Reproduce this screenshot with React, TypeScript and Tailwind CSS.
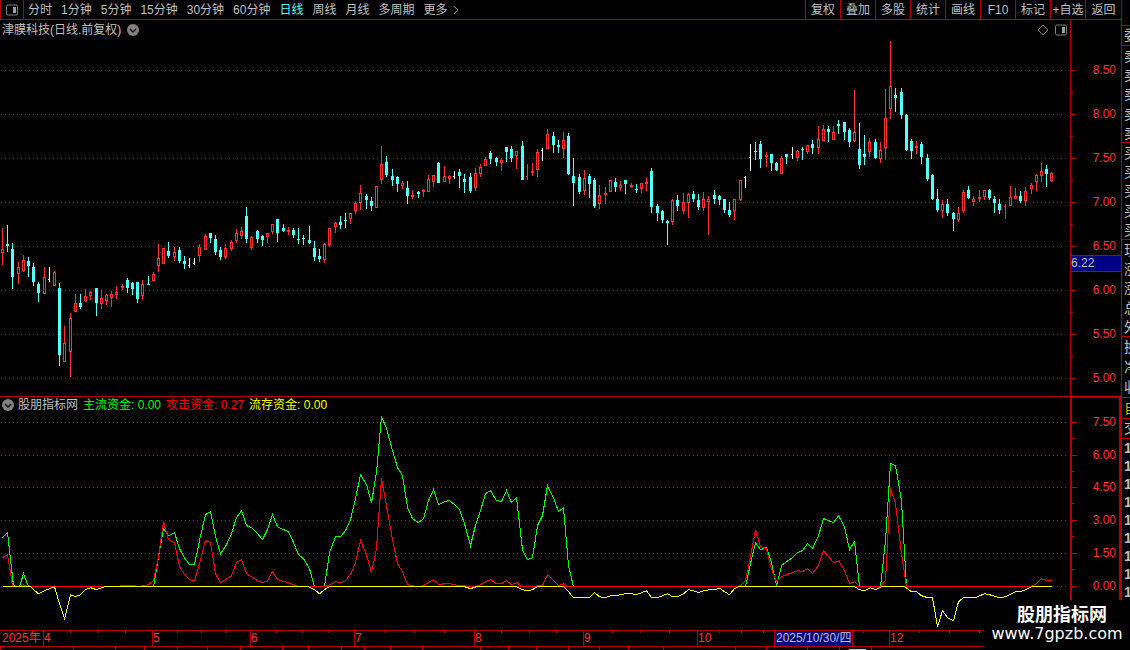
import { ChevronRight } from 'lucide-react';

// One candle per entry: kind (r = rise, c = fall, w = flat), high, body top, body bottom, low
const CANDLES = `
r228,249,253,265 c225,244,246,252 c243,249,277,289 r262,267,274,284 r255,260,271,272 c257,261,266,277
c263,267,282,286 c282,284,293,302 r267,277,294,294 w267,279,280,282 r271,272,286,286 c283,288,355,366
r326,343,362,362 r313,318,352,377 r294,303,312,312 c294,303,307,309 r289,296,301,302 r291,292,296,300
c288,288,303,316 r290,298,304,309 r294,295,301,305 r291,294,298,307 r286,292,295,299 r284,286,288,290
c278,280,288,293 c282,283,289,295 c282,282,299,303 r280,284,296,300 c276,284,285,285 r272,274,281,281
r244,258,266,272 r248,248,264,264 c242,251,256,258 r247,252,257,261 c247,250,261,263 c256,261,264,269
w258,265,266,268 w258,263,264,265 r244,247,256,262 r234,236,250,250 c233,233,238,243 c235,239,252,255
c247,250,257,260 r244,248,257,259 r240,242,249,251 r229,233,241,243 r227,231,236,239 c207,216,239,243
r236,237,248,250 c230,231,239,243 c235,236,240,246 r233,233,237,243 r224,224,232,234 c219,219,233,242
c224,228,231,232 r227,230,232,235 c228,230,235,238 c228,239,240,244 c235,238,239,245 c226,240,243,244
c241,248,257,261 c249,256,259,262 r243,244,260,263 r228,228,245,247 r222,223,227,233 c216,222,225,229
c213,220,221,228 r213,213,219,224 r201,203,211,214 r185,193,203,210 c194,196,200,209 c197,201,206,211
r186,186,208,208 r146,164,180,184 c156,162,175,177 c169,176,180,186 c176,177,184,192 r181,183,186,189
c181,188,196,204 r190,195,197,199 c191,192,194,198 r189,190,192,197 r175,179,192,192 r175,175,182,187
c162,163,183,183 r166,176,182,182 r175,176,179,184 w171,176,177,179 c169,172,176,188 c174,179,182,193
c173,177,191,193 r168,173,188,191 r164,167,174,177 r157,159,166,166 c151,153,159,164 c157,158,162,166
r158,160,163,171 c147,147,152,162 c146,149,158,162 r151,151,156,169 c141,146,180,180 r164,176,177,180
r163,171,173,176 r149,152,170,177 w148,150,151,161 r129,134,149,149 c132,136,145,153 c140,145,147,153
r132,140,149,158 c133,136,174,175 c158,176,183,206 c174,177,192,194 r170,178,191,195 c174,176,184,198
c178,180,206,208 r185,195,204,209 r187,193,195,204 r180,180,192,192 c178,182,187,192 r181,185,188,191
c180,180,184,194 r183,185,187,188 c184,189,190,193 r183,183,189,193 r178,182,184,191 c168,171,207,213
c204,206,213,221 c210,211,220,223 c220,221,223,245 r199,200,222,225 c195,200,206,211 r193,202,211,214
r193,194,203,218 c191,194,199,202 c194,200,207,210 r192,199,208,211 r196,199,202,235 c190,195,199,204
c195,196,200,205 c199,199,210,213 c202,210,215,217 r199,199,211,220 r180,180,200,201 w176,177,178,188
w144,157,158,171 c142,151,152,160 c141,144,159,168 r152,155,157,167 c154,154,163,171 c162,163,170,171
r156,158,174,174 c154,154,157,164 w147,154,155,159 r150,151,158,161 c147,149,150,160 r145,145,152,154
c140,144,148,154 r126,139,148,154 r125,129,141,141 c126,129,132,142 r126,132,140,140 c120,124,126,134
c122,122,132,140 c128,130,142,147 r90,132,141,142 c123,149,165,169 c135,154,157,165 r138,142,152,157
c139,142,158,159 r142,150,159,163 r89,118,148,160 r41,86,109,119 c88,95,98,112 c88,92,115,119
c114,115,150,151 c139,141,151,159 r141,146,148,154 c142,144,157,164 c154,158,179,181 c174,175,199,200
c189,199,210,212 r200,204,211,218 c199,204,213,216 c212,213,219,231 r207,213,220,222 r190,192,211,213
c186,190,198,199 r196,199,202,206 r190,197,199,202 r190,190,197,200 c189,190,198,200 c196,199,203,213
c199,204,210,214 r204,206,207,219 r186,197,206,206 r188,196,199,199 c191,196,201,203 r187,191,201,206
r183,185,189,194 r174,175,182,191 r163,171,176,182 c165,169,174,187 r172,173,181,182
`
  .trim()
  .split(/\s+/)
  .map((item) => {
    const [high, top, bottom, low] = item.slice(1).split(',').map(Number);
    return { kind: item[0], high, top, bottom, low };
  });

const MAIN_FUNDS = [
  '2,537 7,532 13,585 19,586 23,573 28,586 153,586 158,556 163,528 168,535 174,532 179,548 184,557 189,564 194,564 199,540 205,514 210,511 215,536 220,553 226,544 231,533 236,517 241,510 246,525 251,527 257,533 262,539 267,529 272,514 277,526 283,529 288,531 293,542 298,554 303,558 309,568 314,586 324,586 329,552 335,536 340,536 345,530 350,519 355,498 360,474 366,484 371,502 376,472 381,416 386,428 392,450 397,467 402,475 407,507 412,518 418,522 423,518 428,500 433,489 438,504 444,501 449,500 454,504 459,509 464,523 470,545 475,525 480,510 485,493 490,490 496,500 501,501 506,490 511,502 516,497 522,549 527,559 532,557 537,525 542,515 547,485 553,497 558,511 563,507 568,565 573,586',
  '745,586 750,563 755,542 760,549 766,547 771,562 776,585 781,565 786,561 792,557 797,552 802,550 807,543 812,548 818,535 823,518 828,520 833,522 838,515 844,526 849,549 854,541 859,586',
  '880,586 885,540 890,463 895,465 901,500 906,586',
];

const ATTACK_FUNDS =
  '2,557 7,554 12,585 18,586 23,584 28,586 118,586 120,585 134,585 137,586 148,584 153,580 158,556 163,521 168,539 174,542 179,566 184,574 189,579 194,580 199,563 205,540 210,542 215,573 220,582 231,575 236,562 241,559 246,573 257,580 262,582 267,580 272,571 277,579 288,582 293,584 298,586 324,586 329,584 335,581 340,582 345,580 350,574 355,562 360,540 366,554 371,572 376,548 381,478 386,505 392,539 397,563 402,571 407,584 412,585 418,586 423,585 428,582 433,579 438,584 444,583 449,583 459,585 475,586 480,584 485,581 490,579 496,583 501,583 506,580 511,584 516,582 522,586 542,585 547,574 553,580 558,585 563,583 568,586 735,586 740,585 745,580 750,556 755,529 760,546 766,548 771,568 776,581 781,576 786,574 792,572 797,570 802,571 807,568 812,573 818,565 823,550 828,556 833,562 838,560 844,570 849,583 854,581 859,586 880,586 885,580 890,488 895,503 901,553 906,586 1031,586 1036,583 1041,578 1046,580 1051,580';

const REMAIN_FUNDS =
  '2,586 30,586 33,589 38,593 44,590 54,586 59,603 64,618 70,594 75,596 80,594 85,589 90,587 96,589 104,586 308,586 314,589 319,593 324,589 329,586 464,586 470,588 476,586 516,586 522,589 527,590 532,589 537,586 563,586 568,591 573,597 589,597 594,592 599,596 605,597 610,595 615,595 620,594 625,593 631,593 636,594 641,592 646,590 651,597 657,597 662,595 667,593 672,596 677,596 683,593 688,589 693,590 698,592 703,590 709,589 720,588 724,591 729,594 734,588 738,586 854,586 859,589 864,590 870,587 875,589 881,586 904,586 911,591 916,591 921,595 927,597 932,597 937,626 942,610 947,617 953,620 958,601 963,597 975,597 984,593 989,594 999,597 1005,596 1015,591 1020,591 1025,589 1031,586 1051,586';

const PRICE_GRID = [70, 114, 158, 202, 246, 290, 334, 378];
const PRICE_LABELS = ['8.50', '8.00', '7.50', '7.00', '6.50', '6.00', '5.50', '5.00'];
const FUND_GRID = [422, 455, 487, 520, 553, 586];
const FUND_LABELS = ['7.50', '6.00', '4.50', '3.00', '1.50', '0.00'];

const PERIODS = ['分时', '1分钟', '5分钟', '15分钟', '30分钟', '60分钟', '日线', '周线', '月线', '多周期', '更多'];
const TOOLS = ['复权', '叠加', '多股', '统计', '画线', 'F10', '标记', '+自选', '返回'];

const MONTHS = ['4', '5', '6', '7', '8', '9', '10'];
const DATE_TICKS = [
  70, 98, 125, 177, 201, 226, 276, 302, 328, 384, 414, 444, 501, 529, 556, 612, 640, 669, 719, 741, 763, 863, 919, 949,
  979,
];
const TAB_EDGES = [
  0, 73, 115, 144, 177, 207, 240, 282, 308, 341, 364, 390, 422, 480, 508, 536, 568, 599, 628, 663, 735, 766, 807, 839,
  871,
];

const QUOTE_GROUPS = [
  ['卖', '卖', '卖', '卖', '卖'],
  ['买', '买', '买', '买', '买'],
  ['现', '涨', '涨', '总', '外'],
];

const candleX = (index: number) => Math.floor(2.601 + index * 5.194);

const PanelIcon = () => (
  <svg className="h-3 w-3 shrink-0" viewBox="0 0 12 12" fill="none">
    <rect x="0.5" y="1" width="11" height="10" rx="1.5" stroke="#808080" />
    <rect x="7" y="3" width="3" height="6" fill="#a0a0a0" />
  </svg>
);

const CollapseButton = ({ label }: { label: string }) => (
  <button type="button" aria-label={label} className="shrink-0">
    <svg className="block h-3 w-3" viewBox="0 0 12 12" fill="none">
      <circle cx="6" cy="6" r="6" fill="#808080" />
      <path d="M3 5l3 3 3-3" stroke="#101010" strokeWidth="1.4" />
    </svg>
  </button>
);

const GridLines = ({ rows }: { rows: number[] }) => (
  <>
    {rows.map((y) => (
      <line key={y} x1={1} x2={1066} y1={y + 0.5} y2={y + 0.5} stroke="#b40000" strokeDasharray="1 3" />
    ))}
  </>
);

const CandleChart = () => (
  <svg
    className="block min-h-0 w-full flex-1"
    viewBox="0 40 1070 356"
    preserveAspectRatio="none"
    shapeRendering="crispEdges"
  >
    <GridLines rows={PRICE_GRID} />
    {CANDLES.map(({ kind, high, top, bottom, low }, i) => {
      const x = candleX(i);
      const size = bottom - top;
      const color = kind === 'r' ? '#ff3232' : kind === 'c' ? '#54ffff' : '#ffffff';
      const dash = size === 1 && kind !== 'c';
      return (
        <g key={i} fill={color}>
          <rect x={x} y={high} width={1} height={low - high} />
          <rect x={x - 1} y={top} width={dash ? 2 : 3} height={size} />
          {kind === 'r' && size > 2 && <rect x={x} y={top + 1} width={1} height={size - 2} fill="#000000" />}
        </g>
      );
    })}
  </svg>
);

const FundChart = () => (
  <svg
    className="block min-h-0 w-full flex-1"
    viewBox="0 413 1070 217"
    preserveAspectRatio="none"
    shapeRendering="crispEdges"
  >
    <GridLines rows={FUND_GRID} />
    <g transform="translate(0.5 0.5)" fill="none">
      {MAIN_FUNDS.map((points) => (
        <polyline key={points} points={points} stroke="#00ff00" />
      ))}
      <polyline points="2,586 1051,586" stroke="#ff0000" />
      <polyline points={ATTACK_FUNDS} stroke="#ff0000" />
      <polyline points={REMAIN_FUNDS} stroke="#ffff00" />
    </g>
  </svg>
);

const AxisTicks = ({ top, height, rows }: { top: number; height: number; rows: number[] }) => (
  <svg
    className="h-full w-[5px] shrink-0"
    viewBox={`0 ${top} 5 ${height}`}
    preserveAspectRatio="none"
    shapeRendering="crispEdges"
    fill="#b40000"
  >
    {rows.map((y, i) => (
      <g key={y}>
        <rect x={0} y={y} width={5} height={1} />
        {i < rows.length - 1 && <rect x={0} y={Math.floor((y + rows[i + 1]) / 2)} width={2} height={1} />}
      </g>
    ))}
  </svg>
);

const Toolbar = () => (
  <header className="flex h-5 shrink-0 items-stretch border-b border-l border-[#b40000]">
    <button type="button" aria-label="侧栏" className="flex w-[23px] items-center justify-center border-r border-[#b40000]">
      <PanelIcon />
    </button>
    <nav className="flex items-center whitespace-nowrap">
      {PERIODS.map((period) => (
        <button
          type="button"
          key={period}
          className={period === '日线' ? 'pr-[5px] pl-1 text-[#54ffff]' : 'pr-[5px] pl-1'}
        >
          {period}
        </button>
      ))}
      <ChevronRight className="-ml-1 h-3.5 w-3.5" strokeWidth={1.5} />
    </nav>
    <div className="ml-auto flex whitespace-nowrap">
      {TOOLS.map((tool) => (
        <button type="button" key={tool} className="w-[35px] border-l border-[#b40000] last:w-9">
          {tool}
        </button>
      ))}
    </div>
  </header>
);

const PricePanel = () => (
  <section className="flex min-h-0 flex-[377] border-b border-[#b40000]">
    <div className="flex min-w-0 flex-1 flex-col">
      <div className="flex h-5 shrink-0 items-center gap-1.5 pr-[3px] pl-0.5">
        <h1>津膜科技(日线.前复权)</h1>
        <CollapseButton label="展开主图" />
        <svg className="ml-auto h-3 w-3" viewBox="0 0 12 12" fill="none">
          <path d="M6 1l5 5-5 5-5-5z" stroke="#808080" />
        </svg>
        <button type="button" aria-label="切换侧栏">
          <PanelIcon />
        </button>
      </div>
      <CandleChart />
    </div>
    <div className="relative flex w-[51px] border-l border-[#b40000]">
      <AxisTicks top={20} height={376} rows={PRICE_GRID} />
      <div className="flex flex-1 flex-col justify-between pt-[42px] pr-[5px] pb-[10px] text-right text-[#ff3232]">
        {PRICE_LABELS.map((label) => (
          <span key={label}>{label}</span>
        ))}
      </div>
      <div className="absolute inset-x-0 top-[62.5%] h-[17px] border-y border-[#b40000] bg-[#000080] leading-[15px]">
        6.22
      </div>
    </div>
  </section>
);

const FundPanel = () => (
  <section className="flex min-h-0 flex-[234] border-b border-[#b40000]">
    <div className="flex min-w-0 flex-1 flex-col">
      <div className="flex h-4 shrink-0 items-center gap-[5px] pl-0.5 whitespace-nowrap">
        <div className="flex items-center gap-1">
          <CollapseButton label="展开指标" />
          <h2>股朋指标网</h2>
        </div>
        <span className="text-[#00ff00]">主流资金: 0.00</span>
        <span className="text-[#ff0000]">攻击资金: 0.27</span>
        <span className="text-[#ffff00]">流存资金: 0.00</span>
      </div>
      <FundChart />
    </div>
    <div className="flex w-[51px] border-t border-r-2 border-l-2 border-[#b40000]">
      <AxisTicks top={398} height={232} rows={FUND_GRID} />
      <div className="flex flex-1 flex-col justify-between pt-4 pr-[3px] pb-9 text-right text-[#ff3232]">
        {FUND_LABELS.map((label) => (
          <span key={label}>{label}</span>
        ))}
      </div>
    </div>
  </section>
);

const DateAxis = () => (
  <footer className="shrink-0">
    <div className="relative grid h-4 grid-cols-[43fr_109fr_98fr_104fr_120fr_109fr_114fr_77fr_115fr_232fr] border-b border-[#b40000] leading-[15px] whitespace-nowrap text-[#ff3232]">
      <span className="pl-0.5">2025年</span>
      {MONTHS.map((month) => (
        <span key={month} className="border-l border-[#b40000]">
          {month}
        </span>
      ))}
      <span className="flex">
        <time className="border-x border-[#b40000] bg-[#000080] px-px text-[#c0c0c0]" dateTime="2025-10-30">
          2025/10/30/四
        </time>
      </span>
      <span className="border-l border-[#b40000]">12</span>
      <svg className="absolute top-0 left-0 h-0.5 w-full" viewBox="0 0 1121 2" preserveAspectRatio="none" fill="#b40000">
        {DATE_TICKS.map((x) => (
          <rect key={x} x={x} y={0} width={1} height={2} />
        ))}
      </svg>
    </div>
    <svg className="block h-[3px] w-full" viewBox="0 0 1121 3" preserveAspectRatio="none" fill="#b40000">
      {TAB_EDGES.map((x) => (
        <rect key={x} x={x} y={0} width={1} height={3} />
      ))}
      <rect x={849} y={2} width={17} height={1} fill="#54ffff" />
    </svg>
  </footer>
);

const QuoteStrip = () => (
  <aside className="w-[9px] shrink-0 overflow-hidden border-l border-[#b40000] text-[14px] leading-5">
    <div className="h-[26px] border-b border-[#b40000]" />
    <div className="h-5 border-b border-[#b40000] pl-0.5 leading-[19px]">委</div>
    {QUOTE_GROUPS.map((group, i) => (
      <div key={i} className="flex h-[97px] flex-col justify-around border-b border-[#b40000] pl-0.5">
        {group.map((label, j) => (
          <span key={j} className="h-[19px]">
            {label}
          </span>
        ))}
      </div>
    ))}
    <div className="flex h-[61px] flex-col justify-around border-b border-[#b40000] pl-0.5">
      <span>换</span>
      <span>净</span>
      <span>收</span>
    </div>
    <div className="h-[21px] border-b border-[#b40000] pl-0.5 text-[#c0c000]">自</div>
    <div className="h-5 border-b border-[#b40000] pl-0.5 leading-[19px]">交</div>
    {Array.from({ length: 9 }, (_, i) => (
      <div key={i} className="h-[18px] pl-0.5 leading-[18px] font-bold">
        1
      </div>
    ))}
  </aside>
);

const App = () => (
  <div className="relative flex h-screen w-full overflow-hidden bg-black font-['Liberation_Sans','Noto_Sans_CJK_SC',sans-serif] text-[12px] leading-4 text-[#c0c0c0]">
    <main className="flex min-w-0 flex-1 flex-col">
      <Toolbar />
      <PricePanel />
      <FundPanel />
      <DateAxis />
    </main>
    <QuoteStrip />
    <div className="absolute right-0 bottom-0 flex h-[50px] w-[146px] flex-col items-center bg-black pt-[5px] text-white">
      <strong className="pl-2.5 text-[18px] leading-5">股朋指标网</strong>
      <span className="font-['DejaVu_Sans',sans-serif] text-[16px] leading-[18px]">www.7gpzb.com</span>
    </div>
  </div>
);

export default App;
